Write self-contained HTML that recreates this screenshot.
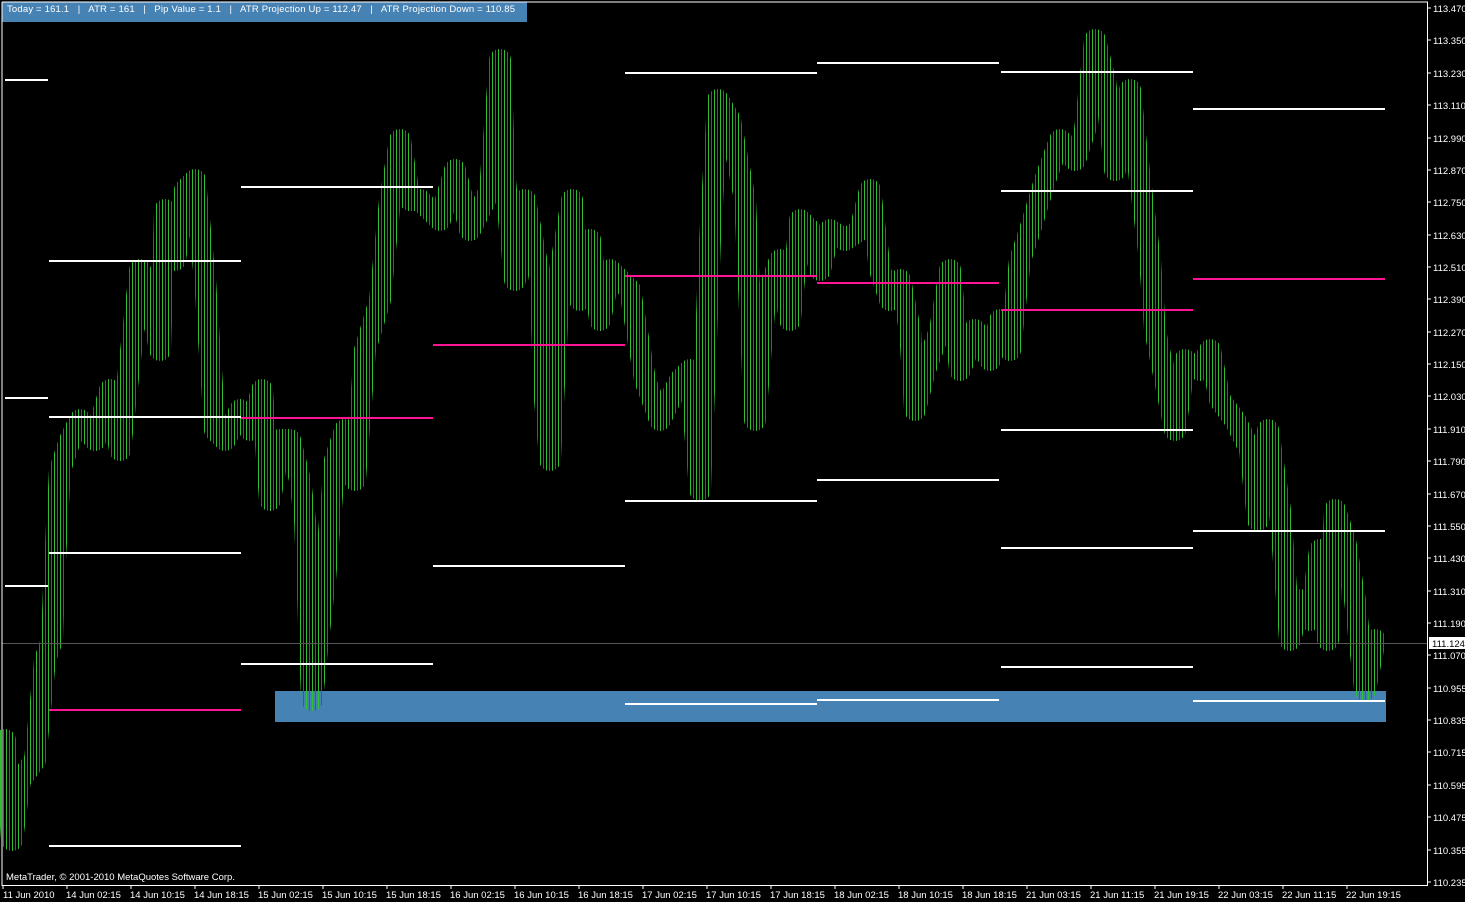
<!DOCTYPE html>
<html><head><meta charset="utf-8"><style>
html,body{margin:0;padding:0;background:#000;width:1465px;height:902px;overflow:hidden}
svg{display:block}
text{font-family:"Liberation Sans",sans-serif;font-size:9.5px;fill:#fff;white-space:pre}
</style></head><body>
<svg width="1465" height="902" xmlns="http://www.w3.org/2000/svg">
<defs>
<pattern id="vp" x="0" y="0" width="6" height="10" patternUnits="userSpaceOnUse">
<rect x="0" y="0" width="1" height="10" fill="#2fbf2f"/>
<rect x="3" y="0" width="1" height="10" fill="#c02a2a"/>
</pattern>
</defs>
<rect width="1465" height="902" fill="#000"/>
<rect x="275" y="691" width="1111" height="31" fill="#4682b4"/>
<g fill="none" stroke-linejoin="round" stroke-linecap="round">
<polyline stroke="url(#vp)" stroke-width="22" points="5,740 12,840 20,780 35,760 45,660 52,640 55,560 60,470 70,440 80,420 95,440 110,390 120,450 130,360 140,270 150,300 160,350 165,210 175,260 185,190 195,180 205,280 215,430 225,440 240,410 250,430 262,390 270,500 280,440 290,440 300,480 305,520 312,700 318,640 325,580 335,460 345,430 355,480 365,350 380,300 390,200 400,140 410,200 420,200 440,220 455,170 470,230 490,190 500,60 505,180 515,280 525,200 540,280 545,400 550,460 560,270 572,200 580,300 590,240 600,320 610,270 620,280 630,290 645,380 660,420 680,380 690,370 700,490 710,240 718,100 730,120 745,200 755,420 765,300 780,260 790,320 800,220 810,230 820,270 830,230 845,240 860,230 870,190 880,270 890,300 900,280 910,330 915,410 925,370 940,330 950,270 960,370 975,330 990,360 1000,320 1010,350 1020,260 1030,230 1045,180 1060,140 1075,160 1085,130 1095,40 1105,80 1115,170 1130,90 1140,180 1150,260 1155,330 1165,380 1175,430 1185,360 1200,370 1210,350 1220,400 1235,420 1250,450 1258,520 1268,430 1280,510 1290,640 1300,600 1310,620 1320,550 1328,640 1335,510 1345,540 1355,600 1365,690 1375,640"/>
</g>
<line x1="2" y1="643.5" x2="1427" y2="643.5" stroke="#555" stroke-width="1"/>
<g stroke="#fff" stroke-width="2">
<line x1="5" y1="80" x2="48" y2="80"/><line x1="5" y1="398" x2="48" y2="398"/><line x1="5" y1="586" x2="48" y2="586"/>
<line x1="49" y1="261" x2="241" y2="261"/><line x1="49" y1="417" x2="241" y2="417"/><line x1="49" y1="553" x2="241" y2="553"/><line x1="49" y1="846" x2="241" y2="846"/>
<line x1="241" y1="187" x2="433" y2="187"/><line x1="241" y1="664" x2="433" y2="664"/>
<line x1="433" y1="566" x2="625" y2="566"/>
<line x1="625" y1="73" x2="817" y2="73"/><line x1="625" y1="501" x2="817" y2="501"/><line x1="625" y1="704" x2="817" y2="704"/>
<line x1="817" y1="63" x2="999" y2="63"/><line x1="817" y1="480" x2="999" y2="480"/><line x1="817" y1="700" x2="999" y2="700"/>
<line x1="1001" y1="72" x2="1193" y2="72"/><line x1="1001" y1="191" x2="1193" y2="191"/><line x1="1001" y1="430" x2="1193" y2="430"/><line x1="1001" y1="548" x2="1193" y2="548"/><line x1="1001" y1="667" x2="1193" y2="667"/>
<line x1="1193" y1="109" x2="1385" y2="109"/><line x1="1193" y1="531" x2="1385" y2="531"/><line x1="1193" y1="701" x2="1385" y2="701"/>
</g>
<g stroke="#ff1493" stroke-width="2">
<line x1="49" y1="710" x2="241" y2="710"/><line x1="241" y1="418" x2="433" y2="418"/><line x1="433" y1="345" x2="625" y2="345"/>
<line x1="625" y1="276" x2="817" y2="276"/><line x1="817" y1="283" x2="999" y2="283"/><line x1="1001" y1="310" x2="1193" y2="310"/><line x1="1193" y1="279" x2="1385" y2="279"/>
</g>
<rect x="2" y="2" width="525" height="20" fill="#4682b4"/>
<text x="7" y="12" textLength="508" lengthAdjust="spacing">Today = 161.1   |   ATR = 161   |   Pip Value = 1.1   |   ATR Projection Up = 112.47   |   ATR Projection Down = 110.85</text>
<polyline points="2,2 1427.5,2 1427.5,885.5 2,885.5 2,2" fill="none" stroke="#fff" stroke-width="1"/>
<text x="6" y="880">MetaTrader, © 2001-2010 MetaQuotes Software Corp.</text>
<g stroke="#fff">
<line x1="1427" x2="1431" y1="8" y2="8"/><line x1="1427" x2="1431" y1="40" y2="40"/><line x1="1427" x2="1431" y1="73" y2="73"/><line x1="1427" x2="1431" y1="105" y2="105"/><line x1="1427" x2="1431" y1="138" y2="138"/><line x1="1427" x2="1431" y1="170" y2="170"/><line x1="1427" x2="1431" y1="202" y2="202"/><line x1="1427" x2="1431" y1="235" y2="235"/><line x1="1427" x2="1431" y1="267" y2="267"/><line x1="1427" x2="1431" y1="299" y2="299"/><line x1="1427" x2="1431" y1="332" y2="332"/><line x1="1427" x2="1431" y1="364" y2="364"/><line x1="1427" x2="1431" y1="396" y2="396"/><line x1="1427" x2="1431" y1="429" y2="429"/><line x1="1427" x2="1431" y1="461" y2="461"/><line x1="1427" x2="1431" y1="494" y2="494"/><line x1="1427" x2="1431" y1="526" y2="526"/><line x1="1427" x2="1431" y1="558" y2="558"/><line x1="1427" x2="1431" y1="591" y2="591"/><line x1="1427" x2="1431" y1="623" y2="623"/><line x1="1427" x2="1431" y1="655" y2="655"/><line x1="1427" x2="1431" y1="688" y2="688"/><line x1="1427" x2="1431" y1="720" y2="720"/><line x1="1427" x2="1431" y1="752" y2="752"/><line x1="1427" x2="1431" y1="785" y2="785"/><line x1="1427" x2="1431" y1="817" y2="817"/><line x1="1427" x2="1431" y1="850" y2="850"/><line x1="1427" x2="1431" y1="882" y2="882"/>
</g>
<g>
<text x="1433" y="12">113.470</text><text x="1433" y="44">113.350</text><text x="1433" y="77">113.230</text><text x="1433" y="109">113.110</text><text x="1433" y="142">112.990</text><text x="1433" y="174">112.870</text><text x="1433" y="206">112.750</text><text x="1433" y="239">112.630</text><text x="1433" y="271">112.510</text><text x="1433" y="303">112.390</text><text x="1433" y="336">112.270</text><text x="1433" y="368">112.150</text><text x="1433" y="400">112.030</text><text x="1433" y="433">111.910</text><text x="1433" y="465">111.790</text><text x="1433" y="498">111.670</text><text x="1433" y="530">111.550</text><text x="1433" y="562">111.430</text><text x="1433" y="595">111.310</text><text x="1433" y="627">111.190</text><text x="1433" y="659">111.070</text><text x="1433" y="692">110.955</text><text x="1433" y="724">110.835</text><text x="1433" y="756">110.715</text><text x="1433" y="789">110.595</text><text x="1433" y="821">110.475</text><text x="1433" y="854">110.355</text><text x="1433" y="886">110.235</text>
</g>
<g stroke="#fff">
<line x1="3" x2="3" y1="885" y2="889"/><line x1="67" x2="67" y1="885" y2="889"/><line x1="131" x2="131" y1="885" y2="889"/><line x1="195" x2="195" y1="885" y2="889"/><line x1="259" x2="259" y1="885" y2="889"/><line x1="323" x2="323" y1="885" y2="889"/><line x1="387" x2="387" y1="885" y2="889"/><line x1="451" x2="451" y1="885" y2="889"/><line x1="515" x2="515" y1="885" y2="889"/><line x1="579" x2="579" y1="885" y2="889"/><line x1="643" x2="643" y1="885" y2="889"/><line x1="707" x2="707" y1="885" y2="889"/><line x1="771" x2="771" y1="885" y2="889"/><line x1="835" x2="835" y1="885" y2="889"/><line x1="899" x2="899" y1="885" y2="889"/><line x1="963" x2="963" y1="885" y2="889"/><line x1="1027" x2="1027" y1="885" y2="889"/><line x1="1091" x2="1091" y1="885" y2="889"/><line x1="1155" x2="1155" y1="885" y2="889"/><line x1="1219" x2="1219" y1="885" y2="889"/><line x1="1283" x2="1283" y1="885" y2="889"/><line x1="1347" x2="1347" y1="885" y2="889"/>
</g>
<g>
<text x="3" y="898">11 Jun 2010</text><text x="66" y="898">14 Jun 02:15</text><text x="130" y="898">14 Jun 10:15</text><text x="194" y="898">14 Jun 18:15</text><text x="258" y="898">15 Jun 02:15</text><text x="322" y="898">15 Jun 10:15</text><text x="386" y="898">15 Jun 18:15</text><text x="450" y="898">16 Jun 02:15</text><text x="514" y="898">16 Jun 10:15</text><text x="578" y="898">16 Jun 18:15</text><text x="642" y="898">17 Jun 02:15</text><text x="706" y="898">17 Jun 10:15</text><text x="770" y="898">17 Jun 18:15</text><text x="834" y="898">18 Jun 02:15</text><text x="898" y="898">18 Jun 10:15</text><text x="962" y="898">18 Jun 18:15</text><text x="1026" y="898">21 Jun 03:15</text><text x="1090" y="898">21 Jun 11:15</text><text x="1154" y="898">21 Jun 19:15</text><text x="1218" y="898">22 Jun 03:15</text><text x="1282" y="898">22 Jun 11:15</text><text x="1346" y="898">22 Jun 19:15</text>
</g>
<rect x="1429" y="637" width="36" height="12" fill="#fff"/>
<text x="1432" y="647" style="fill:#000">111.124</text>
</svg>
</body></html>
